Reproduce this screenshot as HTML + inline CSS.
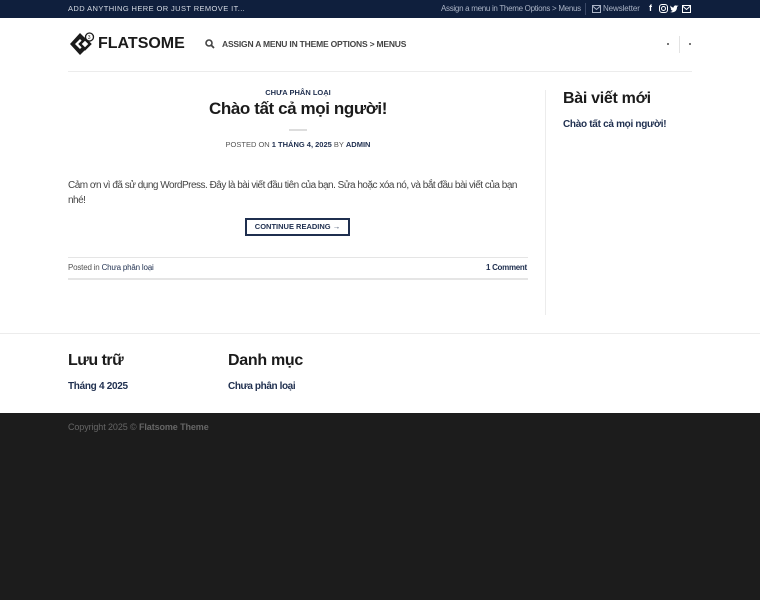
<!DOCTYPE html>
<html><head><meta charset="utf-8"><style>
*{margin:0;padding:0;box-sizing:border-box}
body{width:760px;height:600px;font-family:"Liberation Sans",sans-serif;background:#fff;color:#333;position:relative;overflow:hidden}
.a{position:absolute;white-space:nowrap}
.n{color:#1f2f4f}
</style></head><body>
<div class="a" style="left:0;top:0;width:760px;height:18px;background:#0f1f3d"></div>
<div class="a" style="left:68px;top:4px;font-size:7.5px;color:#d5dae3;letter-spacing:.4px">ADD ANYTHING HERE OR JUST REMOVE IT...</div>
<div class="a" style="left:441px;top:4px;font-size:8px;color:#aab3c5;letter-spacing:-.3px">Assign a menu in Theme Options &gt; Menus</div>
<div class="a" style="left:585px;top:3px;width:1px;height:12px;background:#3a4866"></div>
<svg class="a" style="left:592px;top:5px" width="9" height="8" viewBox="0 0 9 8"><rect x=".5" y=".5" width="8" height="7" fill="none" stroke="#aab3c5"/><path d="M.5 1l4 3.5 4-3.5" fill="none" stroke="#aab3c5"/></svg>
<div class="a" style="left:603px;top:4px;font-size:8px;color:#aab3c5;letter-spacing:-.1px">Newsletter</div>
<div class="a" style="left:649px;top:3px;font-size:9px;color:#fff;font-weight:bold">f</div>
<svg class="a" style="left:659px;top:4px" width="9" height="9" viewBox="0 0 9 9"><rect x=".5" y=".5" width="8" height="8" rx="2.5" fill="none" stroke="#fff"/><circle cx="4.5" cy="4.5" r="2" fill="none" stroke="#fff"/></svg>
<svg class="a" style="left:670px;top:5px" width="9" height="8" viewBox="0 0 9 8"><path d="M0 7c3 1 7 0 7-5l1.5-1.5-1.5 .3C6 0 4 0 3.5 2.5 2 2.5 1 1.5.5.5c-.5 2 .5 3 1 3.3H.8c0 1 1 2 2 2C2 6.5 1 7 0 7z" fill="#fff"/></svg>
<svg class="a" style="left:682px;top:5px" width="9" height="8" viewBox="0 0 9 8"><rect x=".5" y=".5" width="8" height="7" fill="none" stroke="#fff"/><path d="M.5 1l4 3.5 4-3.5" fill="none" stroke="#fff"/></svg>

<svg class="a" style="left:68px;top:31px" width="28" height="27" viewBox="0 0 28 27"><path d="M12 2L2 13l10 11 5-5-3-3-2 2-5-5 5-5 3 3 3-3z" fill="#1b1b1b"/><path d="M12 13l5 5 5-5-5-5z" fill="none" stroke="#1b1b1b" stroke-width="2.5"/><circle cx="21.5" cy="6" r="4" fill="#fff" stroke="#1b1b1b" stroke-width="1.3"/><text x="19.8" y="8" font-size="5" font-family="Liberation Sans" fill="#1b1b1b">3</text></svg>
<div class="a" style="left:98px;top:35px;font-size:16px;font-weight:bold;color:#1b1b1b;letter-spacing:0">FLATSOME</div>
<svg class="a" style="left:205px;top:39px" width="10" height="10" viewBox="0 0 10 10"><circle cx="4" cy="4" r="3" fill="none" stroke="#444" stroke-width="1.6"/><path d="M6.3 6.3L9 9" stroke="#444" stroke-width="1.8"/></svg>
<div class="a" style="left:222px;top:39px;font-size:8.5px;font-weight:bold;color:#444;letter-spacing:-.2px">ASSIGN A MENU IN THEME OPTIONS &gt; MENUS</div>
<div class="a" style="left:667px;top:43px;width:2px;height:2px;background:#777"></div>
<div class="a" style="left:679px;top:36px;width:1px;height:17px;background:#e3e3e3"></div>
<div class="a" style="left:689px;top:43px;width:2px;height:2px;background:#777"></div>
<div class="a" style="left:68px;top:71px;width:624px;height:1px;background:#ececec"></div>

<div class="a n" style="left:0;width:596px;text-align:center;top:88px;font-size:7.5px;font-weight:bold">CHƯA PHÂN LOẠI</div>
<div class="a" style="left:0;width:596px;text-align:center;top:99px;font-size:17px;font-weight:bold;color:#1b1b1b;letter-spacing:-.4px">Chào tất cả mọi người!</div>
<div class="a" style="left:289px;top:129px;width:18px;height:2px;background:#ddd"></div>
<div class="a" style="left:0;width:596px;text-align:center;top:140px;font-size:7.5px;color:#555">POSTED ON <b class="n">1 THÁNG 4, 2025</b> BY <b class="n">ADMIN</b></div>
<div class="a" style="left:68px;top:178px;font-size:10px;color:#444;line-height:15px;width:462px;white-space:normal;letter-spacing:-.5px">Cảm ơn vì đã sử dụng WordPress. Đây là bài viết đầu tiên của bạn. Sửa hoặc xóa nó, và bắt đầu bài viết của bạn nhé!</div>
<div class="a n" style="left:245px;top:218px;width:105px;height:18px;border:2px solid #1f2f4f;font-size:7.5px;font-weight:bold;text-align:center;line-height:14px">CONTINUE READING →</div>
<div class="a" style="left:68px;top:257px;width:460px;height:1px;background:#e5e5e5"></div>
<div class="a" style="left:68px;top:263px;font-size:8px;color:#555;letter-spacing:-.2px">Posted in <span class="n">Chưa phân loại</span></div>
<div class="a n" style="left:486px;top:263px;font-size:8px;font-weight:bold;letter-spacing:-.3px">1 Comment</div>
<div class="a" style="left:68px;top:278px;width:460px;height:2px;background:#e5e5e5"></div>

<div class="a" style="left:545px;top:90px;width:1px;height:225px;background:#ececec"></div>
<div class="a" style="left:563px;top:90px;font-size:16px;font-weight:bold;color:#1b1b1b;letter-spacing:-.3px">Bài viết mới</div>
<div class="a n" style="left:563px;top:119px;font-size:10px;font-weight:bold;letter-spacing:-.3px">Chào tất cả mọi người!</div>

<div class="a" style="left:0;top:333px;width:760px;height:1px;background:#ececec"></div>
<div class="a" style="left:68px;top:352px;font-size:16px;font-weight:bold;color:#1b1b1b;letter-spacing:-.5px">Lưu trữ</div>
<div class="a n" style="left:68px;top:381px;font-size:10px;font-weight:bold;letter-spacing:-.3px">Tháng 4 2025</div>
<div class="a" style="left:228px;top:352px;font-size:16px;font-weight:bold;color:#1b1b1b;letter-spacing:-.3px">Danh mục</div>
<div class="a n" style="left:228px;top:381px;font-size:10px;font-weight:bold;letter-spacing:-.4px">Chưa phân loại</div>

<div class="a" style="left:0;top:413px;width:760px;height:187px;background:#1c1c1c"></div>
<div class="a" style="left:68px;top:422px;font-size:9px;color:#666;letter-spacing:-.1px">Copyright 2025 © <b>Flatsome Theme</b></div>
</body></html>
